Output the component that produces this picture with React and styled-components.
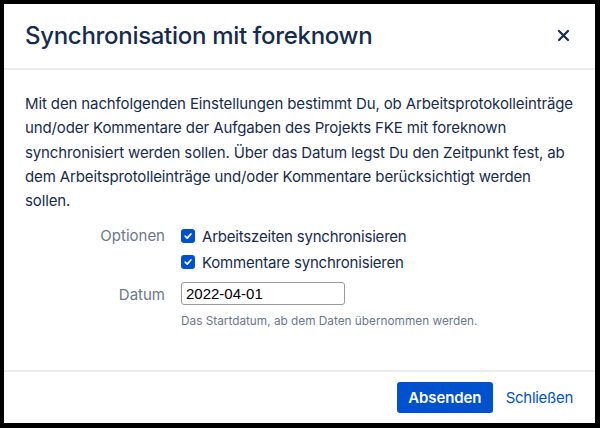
import React from 'react';
import styled, { createGlobalStyle } from 'styled-components';

const GlobalStyle = createGlobalStyle`
  * { box-sizing: border-box; }
  body {
    margin: 0;
    background: #000;
    font-family: Inter, "Liberation Sans", Arial, sans-serif;
  }
`;

const Frame = styled.div`
  width: 600px;
  height: 428px;
  padding: 4px 5px 5px 4px;
  background: #000;
`;

const Dialog = styled.div`
  height: 100%;
  background: #fff;
  display: flex;
  flex-direction: column;
`;

const Header = styled.div`
  height: 66px;
  flex-shrink: 0;
  display: flex;
  align-items: center;
  justify-content: space-between;
  padding: 0 24px 2px 21px;
  border-bottom: 2px solid #ebecf0;
`;

const Title = styled.h1`
  margin: 0;
  font-size: 24px;
  font-weight: 500;
  color: #172b4d;
  letter-spacing: -0.3px;
`;

const CloseButton = styled.button`
  border: none;
  background: none;
  padding: 0;
  width: 16px;
  height: 16px;
  display: flex;
  align-items: center;
  justify-content: center;
  cursor: pointer;
`;

const Body = styled.div`
  flex: 1;
  padding: 22px 21px 0 21px;
`;

const Intro = styled.p`
  margin: 0;
  font-size: 15px;
  line-height: 24.3px;
  letter-spacing: -0.12px;
  color: #172b4d;
  white-space: nowrap;
`;

const Form = styled.div`
  margin-top: 10px;
  display: grid;
  grid-template-columns: 140px 1fr;
  column-gap: 16px;
  align-items: start;
`;

const Label = styled.div`
  text-align: right;
  font-size: 15px;
  line-height: 24px;
  color: #6b778c;
  margin-top: ${(p) => p.offset || 0}px;
`;

const Field = styled.div`
  display: flex;
  flex-direction: column;
  margin-top: ${(p) => p.offset || 0}px;
`;

const CheckRow = styled.label`
  display: flex;
  align-items: center;
  gap: 7px;
  height: 26px;
  font-size: 15px;
  letter-spacing: -0.2px;
  color: #172b4d;
`;

const Box = styled.span`
  width: 14px;
  height: 14px;
  border-radius: 3px;
  background: #0052cc;
  display: flex;
  align-items: center;
  justify-content: center;
  flex-shrink: 0;
`;

const DateInput = styled.input`
  width: 164px;
  height: 23px;
  border: 1px solid #9a9a9a;
  border-radius: 3px;
  padding: 0 4px;
  font-family: "Liberation Sans", Arial, sans-serif;
  font-size: 15px;
  color: #000;
  outline: none;
`;

const Hint = styled.div`
  margin-top: 9px;
  font-size: 11.8px;
  color: #6b778c;
`;

const Footer = styled.div`
  height: 53px;
  flex-shrink: 0;
  border-top: 2px solid #ebecf0;
  display: flex;
  align-items: center;
  justify-content: flex-end;
  gap: 13px;
  padding: 0 22px 0 0;
`;

const Primary = styled.button`
  height: 31px;
  width: 96px;
  padding: 0;
  border: none;
  border-radius: 3px;
  background: #0052cc;
  color: #fff;
  font-family: Inter, "Liberation Sans", Arial, sans-serif;
  font-size: 15px;
  font-weight: 600;
  letter-spacing: -0.1px;
  cursor: pointer;
`;

const LinkButton = styled.button`
  border: none;
  background: none;
  padding: 0;
  color: #0052cc;
  font-family: Inter, "Liberation Sans", Arial, sans-serif;
  font-size: 15px;
  letter-spacing: -0.3px;
  cursor: pointer;
`;

const Check = () => (
  <Box>
    <svg width="10" height="10" viewBox="0 0 10 10">
      <path d="M2.2 5.2 L4.2 7.1 L7.9 3" fill="none" stroke="#fff" strokeWidth="1.7" strokeLinecap="round" strokeLinejoin="round" />
    </svg>
  </Box>
);

export default function App() {
  return (
    <Frame>
      <GlobalStyle />
      <Dialog>
        <Header>
          <Title>Synchronisation mit foreknown</Title>
          <CloseButton aria-label="Schließen">
            <svg width="13" height="13" viewBox="0 0 13 13">
              <path d="M2 2 L11 11 M11 2 L2 11" stroke="#172b4d" strokeWidth="2.2" strokeLinecap="round" />
            </svg>
          </CloseButton>
        </Header>
        <Body>
          <Intro>
            Mit den nachfolgenden Einstellungen bestimmt Du, ob Arbeitsprotokolleinträge<br />
            und/oder Kommentare der Aufgaben des Projekts FKE mit foreknown<br />
            synchronisiert werden sollen. Über das Datum legst Du den Zeitpunkt fest, ab<br />
            dem Arbeitsprotolleinträge und/oder Kommentare berücksichtigt werden<br />
            sollen.
          </Intro>
          <Form>
            <Label offset={1}>Optionen</Label>
            <Field>
              <CheckRow><Check />Arbeitszeiten synchronisieren</CheckRow>
              <CheckRow><Check />Kommentare synchronisieren</CheckRow>
            </Field>
            <Label offset={8}>Datum</Label>
            <Field offset={7}>
              <DateInput defaultValue="2022-04-01" />
              <Hint>Das Startdatum, ab dem Daten übernommen werden.</Hint>
            </Field>
          </Form>
        </Body>
        <Footer>
          <Primary>Absenden</Primary>
          <LinkButton>Schließen</LinkButton>
        </Footer>
      </Dialog>
    </Frame>
  );
}
